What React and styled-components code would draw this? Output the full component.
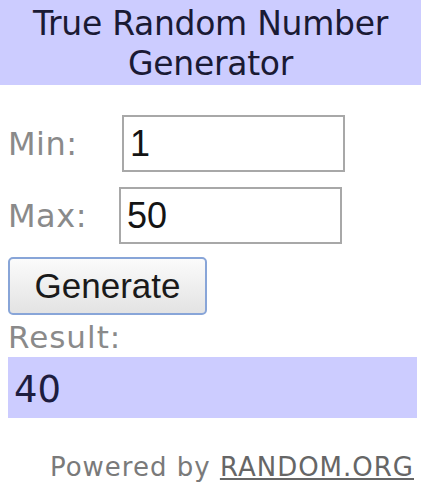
import React from 'react'
import styled, { createGlobalStyle } from 'styled-components'

const GlobalStyle = createGlobalStyle`
  html, body {
    margin: 0;
    padding: 0;
    background: #ffffff;
  }
`

const Widget = styled.div`
  width: 421px;
  font-family: "DejaVu Sans", Verdana, sans-serif;
`

const Header = styled.div`
  background: #ccccff;
  height: 85px;
  box-sizing: border-box;
  padding-top: 4px;
  text-align: center;
  font-size: 33px;
  line-height: 40px;
  letter-spacing: -0.3px;
  color: #1a1a34;
`

const Body = styled.div`
  display: flex;
  flex-direction: column;
  align-items: flex-start;
  padding: 30px 4px 0 8px;
`

const Row = styled.div`
  display: flex;
  align-items: center;
  margin-bottom: ${p => p.gap || 0}px;
`

const Label = styled.label`
  width: ${p => p.w}px;
  font-size: 32px;
  letter-spacing: 0.5px;
  color: #8a8a8a;
`

const Field = styled.input`
  width: 223px;
  height: 57px;
  box-sizing: border-box;
  border: 2px solid #a8a8a8;
  padding: 0 0 0 6px;
  margin: 0;
  font-family: "Liberation Sans", Arial, sans-serif;
  font-size: 36px;
  color: #141414;
  background: #fff;
  outline: none;
`

const Button = styled.button`
  margin-top: 13px;
  width: 199px;
  height: 58px;
  box-sizing: border-box;
  border: 2px solid #88a5d8;
  border-radius: 5px;
  background: linear-gradient(#fbfbfb, #e3e3e3);
  font-family: "Liberation Sans", Arial, sans-serif;
  font-size: 35px;
  color: #1a1a1a;
  padding: 0;
`

const ResultLabel = styled.div`
  margin-top: 4px;
  font-size: 31px;
  line-height: 36px;
  letter-spacing: 1px;
  color: #8a8a8a;
`

const ResultBox = styled.div`
  margin-top: 2px;
  align-self: stretch;
  height: 61px;
  box-sizing: border-box;
  padding: 8px 0 0 6px;
  background: #ccccff;
  font-size: 37px;
  line-height: 50px;
  color: #1d1d3f;
`

const Footer = styled.div`
  margin-top: 34px;
  padding-right: 7px;
  text-align: right;
  font-size: 26px;
  line-height: 30px;
  letter-spacing: 1px;
  color: #7a7a7a;
`

const Link = styled.a`
  color: #666;
  text-decoration: underline;
`

function App() {
  return (
    <>
      <GlobalStyle />
      <Widget>
        <Header>
          True Random Number
          <br />
          Generator
        </Header>
        <Body>
          <Row gap={15}>
            <Label w={114}>Min:</Label>
            <Field readOnly value="1" />
          </Row>
          <Row>
            <Label w={111}>Max:</Label>
            <Field readOnly value="50" />
          </Row>
          <Button>Generate</Button>
          <ResultLabel>Result:</ResultLabel>
          <ResultBox>40</ResultBox>
        </Body>
        <Footer>
          Powered by <Link>RANDOM.ORG</Link>
        </Footer>
      </Widget>
    </>
  )
}

export default App
